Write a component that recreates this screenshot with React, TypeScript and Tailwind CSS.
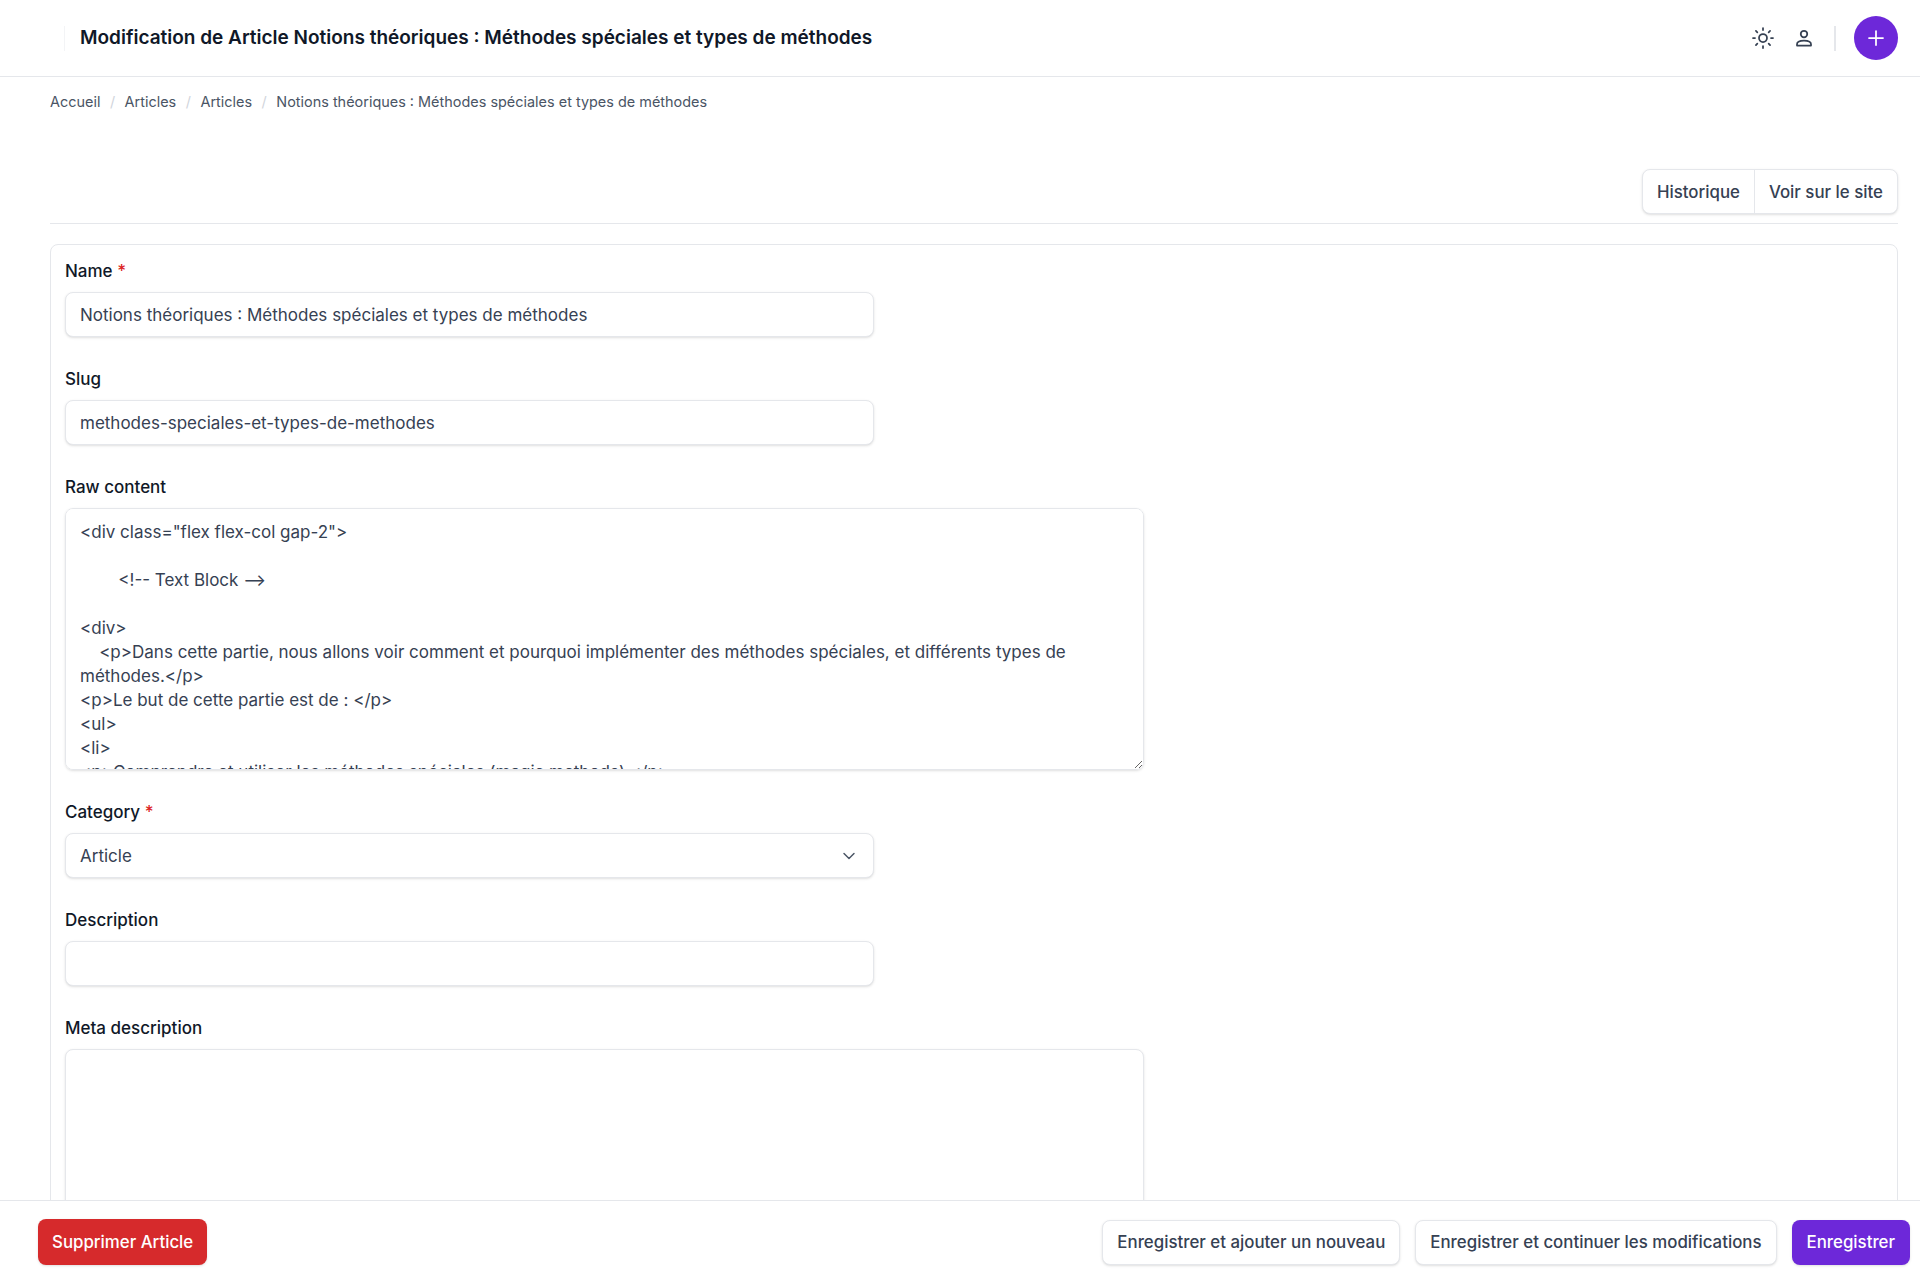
import { Plus, ChevronDown, Sun } from 'lucide-react';

const rawContent = `<div class="flex flex-col gap-2">

        <!-- Text Block -->

<div>
    <p>Dans cette partie, nous allons voir comment et pourquoi implémenter des méthodes spéciales, et différents types de méthodes.</p>
<p>Le but de cette partie est de : </p>
<ul>
<li>
<p>Comprendre et utiliser les méthodes spéciales (magic methods) </p>
</li>
</ul>
</div>`;

const breadcrumbs = ['Accueil', 'Articles', 'Articles', 'Notions théoriques : Méthodes spéciales et types de méthodes'];

function Label({ text, required }: { text: string; required?: boolean }) {
    return (
        <label className="block text-[17px] font-medium leading-6 text-gray-900">
            {text}
            {required && <span className="text-[#dc2626]"> *</span>}
        </label>
    );
}

function TextInput({ value }: { value: string }) {
    return (
        <input
            readOnly
            value={value}
            className="mt-[9px] block h-[45px] w-[809px] rounded-lg border border-gray-200 bg-white px-[14px] pt-px text-[17px] text-gray-700 shadow-sm outline-none"
        />
    );
}

export default function App() {
    return (
        <div className="flex h-screen flex-col overflow-hidden bg-white font-['Inter',sans-serif]">
            <header className="flex h-[77px] shrink-0 items-center border-b border-gray-200 pl-[64px] pr-[22px]">
                <div className="h-[25px] border-l border-gray-100" />
                <h1 className="ml-[15px] text-[19px] font-semibold text-gray-900">
                    Modification de Article Notions théoriques : Méthodes spéciales et types de méthodes
                </h1>
                <div className="ml-auto flex items-center">
                    <Sun className="h-6 w-6 text-gray-700" strokeWidth={1.75} />
                    <svg className="ml-[17px] h-6 w-6 text-gray-700" viewBox="0 0 24 24" fill="none" stroke="currentColor" strokeWidth="1.75">
                        <circle cx="12" cy="8" r="3.25" />
                        <path d="M5 19.5v-1.25C5 16 7.5 14.5 12 14.5s7 1.5 7 3.75v1.25z" strokeLinejoin="round" />
                    </svg>
                    <div className="ml-[18px] h-[25px] border-l-2 border-gray-200" />
                    <button className="ml-[18px] flex h-[44px] w-[44px] items-center justify-center rounded-full bg-[#6d28d9] text-white">
                        <Plus className="h-6 w-6" strokeWidth={1.75} />
                    </button>
                </div>
            </header>

            <main className="min-h-0 flex-1 overflow-hidden pl-[50px] pr-[22px]">
                <nav className="mt-[15px] flex items-center text-[14.45px] leading-5 text-gray-600">
                    {breadcrumbs.map((b, i) => (
                        <span key={i} className="flex items-center">
                            {i > 0 && <span className="mx-[9.5px] text-gray-300">/</span>}
                            {b}
                        </span>
                    ))}
                </nav>

                <div className="mt-[57px] flex justify-end border-b border-gray-200 pb-[9px]">
                    <div className="flex h-[45px] rounded-lg border border-gray-200 bg-white text-[16.85px] font-medium text-gray-700 shadow-sm">
                        <button className="border-r border-gray-200 px-[14px] pt-[2px]">Historique</button>
                        <button className="px-[14px] pt-[2px]">Voir sur le site</button>
                    </div>
                </div>

                <form className="mt-5 rounded-lg border border-gray-200 px-[14px] pt-[14px] pb-10">
                    <Label text="Name" required />
                    <TextInput value="Notions théoriques : Méthodes spéciales et types de méthodes" />

                    <div className="mt-[30px]">
                        <Label text="Slug" />
                        <TextInput value="methodes-speciales-et-types-de-methodes" />
                    </div>

                    <div className="mt-[30px]">
                        <Label text="Raw content" />
                        <textarea
                            readOnly
                            value={rawContent}
                            className="mt-[9px] block h-[262px] w-[1079px] rounded-lg border border-gray-200 bg-white px-[14px] pt-[11px] pb-[9px] text-[17px] leading-6 text-gray-700 shadow-sm outline-none [scrollbar-width:none]"
                        />
                    </div>

                    <div className="mt-[30px]">
                        <Label text="Category" required />
                        <div className="mt-[9px] flex h-[45px] w-[809px] items-center justify-between rounded-lg border border-gray-200 bg-white px-[14px] text-[17px] text-gray-700 shadow-sm">
                            <span className="pt-[2px]">Article</span>
                            <ChevronDown className="h-5 w-5 text-gray-600" strokeWidth={1.75} />
                        </div>
                    </div>

                    <div className="mt-[30px]">
                        <Label text="Description" />
                        <TextInput value="" />
                    </div>

                    <div className="mt-[30px]">
                        <Label text="Meta description" />
                        <textarea
                            readOnly
                            className="mt-[9px] block h-[262px] w-[1079px] rounded-lg border border-gray-200 bg-white px-[14px] py-[10px] text-[17px] text-gray-700 shadow-sm outline-none"
                        />
                    </div>
                </form>
            </main>

            <footer className="flex h-[82px] shrink-0 items-center border-t border-gray-200 bg-white pt-px pl-[38px] pr-[10px]">
                <button className="h-[46px] rounded-lg bg-[#d62a2c] px-[14px] pt-px text-[16.85px] font-medium text-white shadow-sm">
                    Supprimer Article
                </button>
                <div className="ml-auto flex gap-[15px]">
                    <button className="h-[45px] rounded-lg border border-gray-200 bg-white px-[14px] pt-px text-[16.85px] font-medium text-gray-700 shadow-sm">
                        Enregistrer et ajouter un nouveau
                    </button>
                    <button className="h-[45px] rounded-lg border border-gray-200 bg-white px-[14px] pt-px text-[16.85px] font-medium text-gray-700 shadow-sm">
                        Enregistrer et continuer les modifications
                    </button>
                    <button className="h-[45px] rounded-lg bg-[#6d28d9] px-[15px] pt-px text-[16.85px] font-medium text-white shadow-sm">
                        Enregistrer
                    </button>
                </div>
            </footer>
        </div>
    );
}
